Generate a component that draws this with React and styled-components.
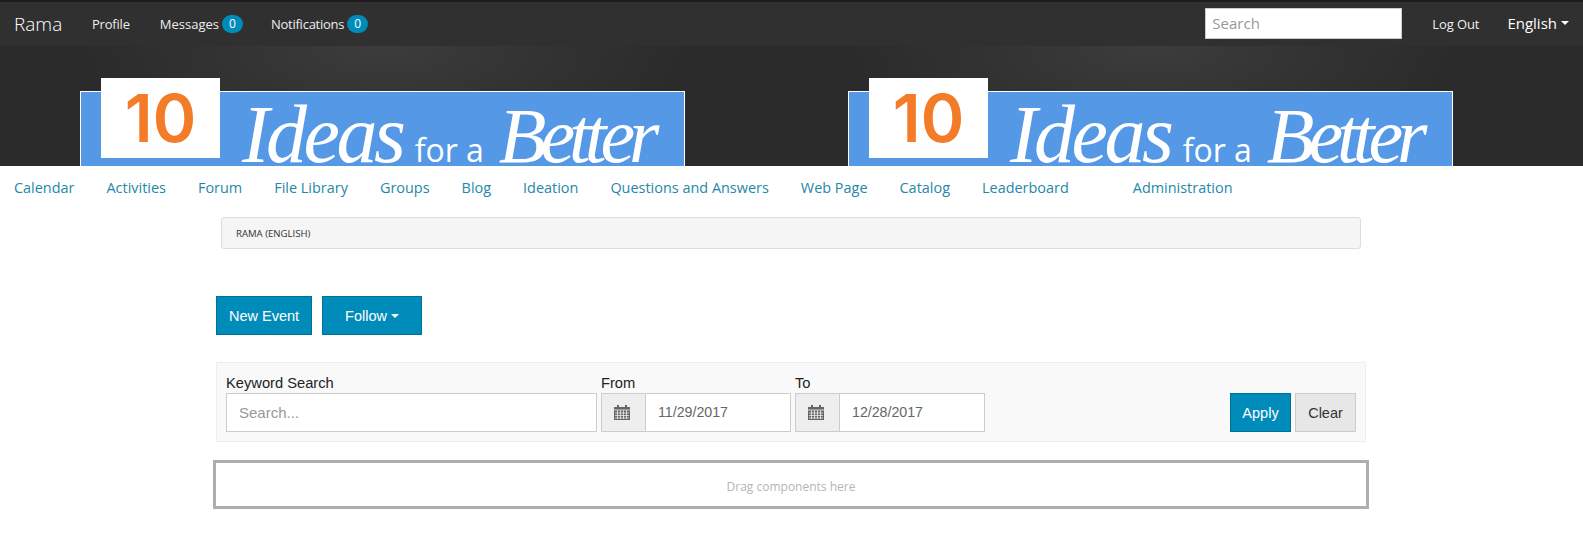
import React from 'react'
import styled, { createGlobalStyle } from 'styled-components'

const GlobalStyle = createGlobalStyle`
  html, body {
    margin: 0;
    padding: 0;
    background: #fff;
    font-family: "Open Sans", sans-serif;
  }
  * {
    box-sizing: border-box;
  }
`

const TopBar = styled.div`
  display: flex;
  align-items: center;
  height: 46px;
  padding-left: 14px;
  background: #303030;
  border-top: 2px solid #1d1d1d;
  color: #fff;
  font-size: 13px;
`
const Brand = styled.div`
  font-size: 19px;
  font-weight: 300;
  width: 78px;
`
const TopLink = styled.div`
  display: flex;
  align-items: center;
  gap: 3px;
  margin-right: ${p => p.$gap || 28}px;
  color: #eee;
  letter-spacing: ${p => p.$track || 0}px;
`
const Badge = styled.span`
  display: inline-block;
  min-width: 21px;
  height: 18px;
  line-height: 18px;
  border-radius: 9px;
  background: #008cba;
  color: #fff;
  text-align: center;
  font-size: 12px;
  letter-spacing: 0;
`
const TopRight = styled.div`
  display: flex;
  align-items: center;
  margin-left: auto;
`
const TopSearch = styled.input`
  width: 197px;
  height: 31px;
  margin: -2px 30px 0 0;
  padding: 0 6px;
  border: 1px solid #ccc;
  background: #fff;
  font-family: "Open Sans", sans-serif;
  font-size: 15px;
  &::placeholder { color: #999; }
`
const LangLink = styled.div`
  display: flex;
  align-items: center;
  margin: -3px 14px 0 27px;
  font-size: 15px;
`
const Caret = styled.span`
  display: inline-block;
  width: 0;
  height: 0;
  margin-left: ${p => p.$left || 4}px;
  border-left: 4px solid transparent;
  border-right: 4px solid transparent;
  border-top: 4px solid ${p => p.$color || '#fff'};
`

const Hero = styled.div`
  display: flex;
  gap: 163px;
  height: 120px;
  padding: 45px 0 0 80px;
  background-color: #2b2b2b;
  background-image: radial-gradient(ellipse 300px 120px at 384px 0, #3c3c3c, #2b2b2b);
  background-size: 768px 120px;
`
const Banner = styled.div`
  position: relative;
  flex: none;
  width: 605px;
  height: 75px;
  padding: 10px 0 0 161px;
  background: #5599e6;
  border: 1px solid #fff;
  border-bottom: none;
  color: #fff;
  white-space: nowrap;
`
const NumberBox = styled.div`
  position: absolute;
  top: -14px;
  left: 20px;
  width: 119px;
  height: 80px;
  background: #fff;
  color: #f47b28;
  font-family: Inter, sans-serif;
  font-size: 66px;
  font-weight: 600;
  line-height: 80px;
  letter-spacing: 0;
  text-align: center;
`
const BigWord = styled.span`
  font-family: "Liberation Serif", serif;
  font-style: italic;
  font-size: ${p => p.$size}px;
  line-height: 66px;
  letter-spacing: ${p => p.$track || 0}px;
`
const SmallWord = styled.span`
  font-family: "Open Sans", sans-serif;
  font-size: 32px;
  margin: 0 15px 0 12px;
`

const MainNav = styled.div`
  display: flex;
  align-items: center;
  height: 43px;
  padding-left: 14px;
  color: #2587a8;
  font-size: 14.44px;
`
const NavItem = styled.div`
  margin-right: ${p => p.$gap || 32}px;
`

const Content = styled.div`
  padding-left: 216px;
  width: 1368px;
`
const Crumb = styled.div`
  width: 1140px;
  height: 32px;
  margin: 8px 0 0 5px;
  padding-left: 14px;
  border: 1px solid #ddd;
  border-radius: 3px;
  background: #f5f5f5;
  color: #333;
  font-size: 9.6px;
  line-height: 31px;
`
const ButtonRow = styled.div`
  display: flex;
  gap: 10px;
  margin-top: 47px;
`
const Button = styled.div`
  display: flex;
  align-items: center;
  justify-content: center;
  width: ${p => p.$width}px;
  height: ${p => p.$height || 39}px;
  border: 1px solid ${p => (p.$plain ? '#ccc' : '#007095')};
  background: ${p => (p.$plain ? '#e7e7e7' : '#008cba')};
  color: ${p => (p.$plain ? '#333' : '#fff')};
  font-family: "Liberation Sans", sans-serif;
  font-size: 14.5px;
`
const FilterPanel = styled.div`
  display: flex;
  align-items: flex-end;
  width: 1150px;
  height: 80px;
  margin-top: 27px;
  padding: 0 9px 9px;
  border: 1px solid #eee;
  background: #f9f9f9;
  font-family: "Liberation Sans", sans-serif;
`
const Field = styled.div`
  margin-right: ${p => p.$gap || 4}px;
`
const FieldLabel = styled.div`
  height: 20px;
  color: #222;
  font-size: 14.7px;
  line-height: 20px;
`
const KeywordInput = styled.input`
  display: block;
  width: 371px;
  height: 39px;
  padding: 0 12px;
  border: 1px solid #ccc;
  background: #fff;
  font-family: "Liberation Sans", sans-serif;
  font-size: 15px;
  &::placeholder { color: #999; }
`
const DateGroup = styled.div`
  display: flex;
  width: 190px;
  height: 39px;
  border: 1px solid #ccc;
  background: #fff;
`
const DateAddon = styled.div`
  display: flex;
  align-items: center;
  justify-content: center;
  flex: none;
  width: 44px;
  padding-right: 3px;
  background: #eee;
  border-right: 1px solid #ccc;
`
const DateValue = styled.div`
  padding-left: 12px;
  color: #666;
  font-size: 14.2px;
  line-height: 37px;
`
const FilterActions = styled.div`
  display: flex;
  gap: 4px;
  margin-left: auto;
`
const DropZone = styled.div`
  width: 1156px;
  height: 49px;
  margin: 18px 0 0 -3px;
  border: 3px solid #aeaeae;
  color: #b5b5b5;
  font-size: 12px;
  line-height: 47px;
  text-align: center;
`

function CalendarIcon() {
  return (
    <svg width="16" height="15" viewBox="0 0 16 15">
      <path fill="#666" d="M0 2h3V0h2v2h6V0h2v2h3v13H0z" />
      <path
        stroke="#eee"
        strokeWidth="0.8"
        fill="none"
        d="M0 5h16M1 8h14M1 10.5h14M1 13h14M3.5 5v9M6.5 5v9M9.5 5v9M12.5 5v9"
      />
    </svg>
  )
}

function AdBanner() {
  return (
    <Banner>
      <NumberBox>10</NumberBox>
      <BigWord $size={82} $track={-3.4}>Ideas</BigWord>
      <SmallWord>for a</SmallWord>
      <BigWord $size={78} $track={-6}>Better</BigWord>
    </Banner>
  )
}

const navItems = ['Calendar', 'Activities', 'Forum', 'File Library', 'Groups', 'Blog', 'Ideation', 'Questions and Answers', 'Web Page', 'Catalog']

export default function App() {
  return (
    <>
      <GlobalStyle />
      <TopBar>
        <Brand>Rama</Brand>
        <TopLink $gap={30} $track={-0.2}>Profile</TopLink>
        <TopLink>Messages <Badge>0</Badge></TopLink>
        <TopLink $track={-0.25}>Notifications <Badge>0</Badge></TopLink>
        <TopRight>
          <TopSearch placeholder="Search" />
          <TopLink $gap={1} $track={-0.1}>Log Out</TopLink>
          <LangLink>English<Caret /></LangLink>
        </TopRight>
      </TopBar>
      <Hero>
        <AdBanner />
        <AdBanner />
      </Hero>
      <MainNav>
        {navItems.map(item => <NavItem key={item}>{item}</NavItem>)}
        <NavItem $gap={64}>Leaderboard</NavItem>
        <NavItem>Administration</NavItem>
      </MainNav>
      <Content>
        <Crumb>RAMA (ENGLISH)</Crumb>
        <ButtonRow>
          <Button $width={96}>New Event</Button>
          <Button $width={100}>Follow<Caret $left={4} /></Button>
        </ButtonRow>
        <FilterPanel>
          <Field>
            <FieldLabel>Keyword Search</FieldLabel>
            <KeywordInput placeholder="Search..." />
          </Field>
          <Field>
            <FieldLabel>From</FieldLabel>
            <DateGroup>
              <DateAddon><CalendarIcon /></DateAddon>
              <DateValue>11/29/2017</DateValue>
            </DateGroup>
          </Field>
          <Field>
            <FieldLabel>To</FieldLabel>
            <DateGroup>
              <DateAddon><CalendarIcon /></DateAddon>
              <DateValue>12/28/2017</DateValue>
            </DateGroup>
          </Field>
          <FilterActions>
            <Button $width={61}>Apply</Button>
            <Button $width={61} $plain>Clear</Button>
          </FilterActions>
        </FilterPanel>
        <DropZone>Drag components here</DropZone>
      </Content>
    </>
  )
}
